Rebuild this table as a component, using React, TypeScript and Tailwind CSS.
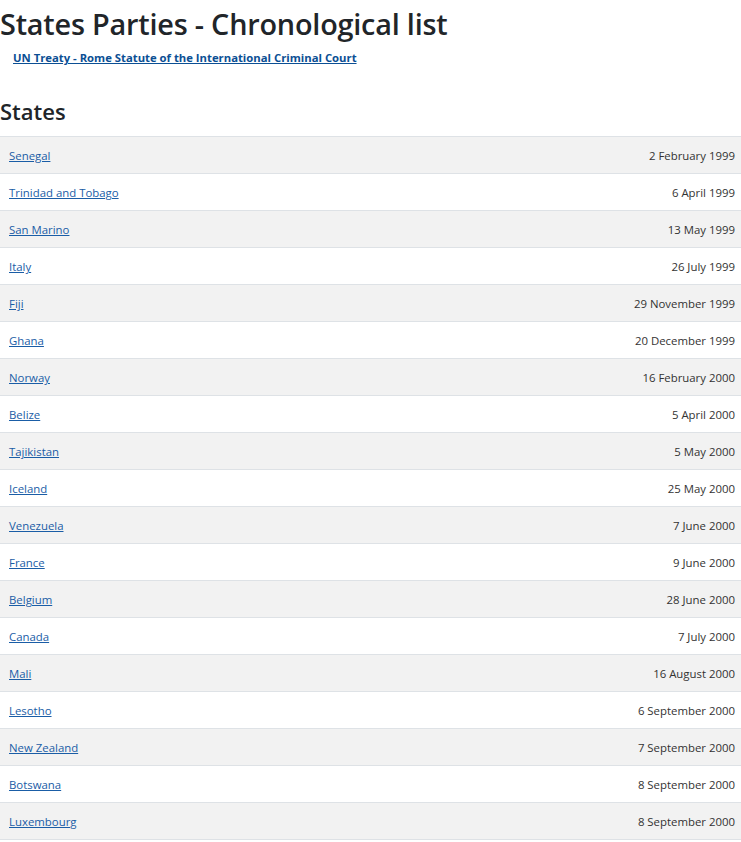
const states: [string, string][] = [
  ['Senegal', '2 February 1999'],
  ['Trinidad and Tobago', '6 April 1999'],
  ['San Marino', '13 May 1999'],
  ['Italy', '26 July 1999'],
  ['Fiji', '29 November 1999'],
  ['Ghana', '20 December 1999'],
  ['Norway', '16 February 2000'],
  ['Belize', '5 April 2000'],
  ['Tajikistan', '5 May 2000'],
  ['Iceland', '25 May 2000'],
  ['Venezuela', '7 June 2000'],
  ['France', '9 June 2000'],
  ['Belgium', '28 June 2000'],
  ['Canada', '7 July 2000'],
  ['Mali', '16 August 2000'],
  ['Lesotho', '6 September 2000'],
  ['New Zealand', '7 September 2000'],
  ['Botswana', '8 September 2000'],
  ['Luxembourg', '8 September 2000'],
]

export default function App() {
  return (
    <div className="bg-white text-[#212529] font-['Open_Sans',sans-serif]">
      <h1 className="text-[28.8px] leading-[38px] font-semibold pt-[5px] tracking-[-0.2px]">States Parties - Chronological list</h1>
      <a href="#" className="block ml-[13px] mt-[7px] text-[11.3px] font-bold text-[#0b4f94] underline leading-[16px]">
        UN Treaty - Rome Statute of the International Criminal Court
      </a>
      <h2 className="text-[22px] leading-[30px] font-semibold mt-[30px] mb-[10px]">States</h2>
      <div className="border-t border-[#dee2e6]">
        {states.map(([name, date], i) => (
          <div
            key={name}
            className={`flex items-center justify-between h-[37px] pl-[9px] pr-[6px] pt-[2px] border-b border-[#dee2e6] text-[11.4px] ${
              i % 2 === 0 ? 'bg-[#f2f2f2]' : 'bg-white'
            }`}
          >
            <a href="#" className="text-[#1a5da6] underline">{name}</a>
            <span className="text-[#333]">{date}</span>
          </div>
        ))}
      </div>
    </div>
  )
}
